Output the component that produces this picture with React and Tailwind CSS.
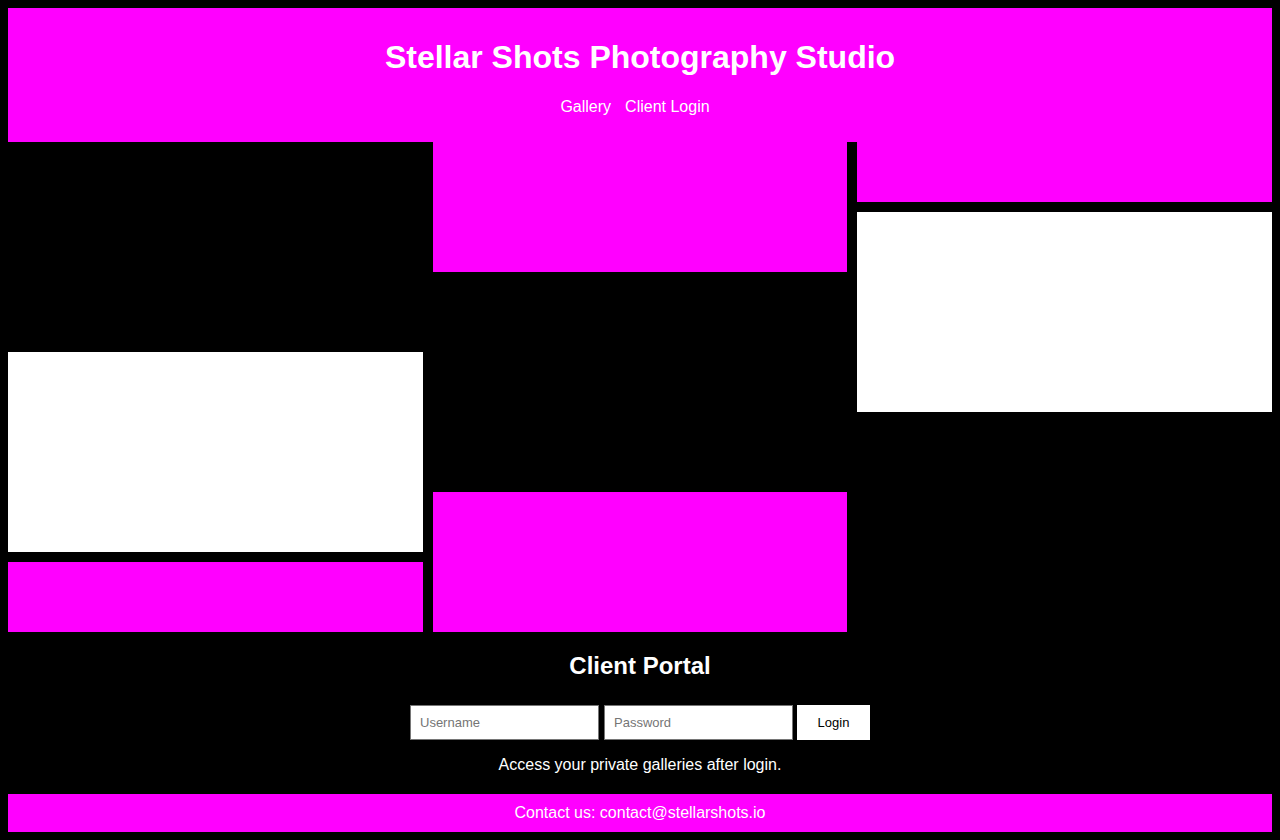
import React from "react";

const COLUMNS = [
  [
    { h: "h-[200px]", bg: "bg-black" },
    { h: "h-[200px]", bg: "bg-white" },
    { h: "h-[70px]", bg: "bg-[#ff00ff]" },
  ],
  [
    { h: "h-[130px]", bg: "bg-[#ff00ff]" },
    { h: "h-[200px]", bg: "bg-black" },
    { h: "h-[140px]", bg: "bg-[#ff00ff]" },
  ],
  [
    { h: "h-[60px]", bg: "bg-[#ff00ff]" },
    { h: "h-[200px]", bg: "bg-white" },
  ],
];

const App = () => {
  return (
    <div className="min-h-[840px] bg-black p-2 font-['Liberation_Sans',Arial,sans-serif] text-white">
      <header className="bg-[#ff00ff] pt-[31px] pb-[26px] text-center">
        <h1 className="text-[32px] leading-[37px] font-bold">
          Stellar Shots Photography Studio
        </h1>
        <nav className="mt-[22px] flex justify-center gap-[4px] text-base leading-[18px]">
          <a href="#gallery" className="mr-[10px]">Gallery</a>
          <a href="#login" className="mr-[10px]">Client Login</a>
        </nav>
      </header>

      <section id="gallery" className="grid grid-cols-3 gap-[10px] items-start">
        {COLUMNS.map((col, i) => (
          <div key={i} className="flex flex-col gap-[10px]">
            {col.map((item, j) => (
              <div key={j} className={`${item.h} ${item.bg}`} />
            ))}
          </div>
        ))}
      </section>

      <section id="login" className="text-center">
        <h2 className="mt-5 text-2xl leading-[28px] font-bold">Client Portal</h2>
        <form className="mt-[25px] flex justify-center items-start">
          <input
            type="text"
            placeholder="Username"
            className="w-[189px] h-[35px] px-[9px] border border-[#767676] bg-white text-[13px] text-black placeholder:text-[#757575] outline-none mr-[5px]"
          />
          <input
            type="password"
            placeholder="Password"
            className="w-[189px] h-[35px] px-[9px] border border-[#767676] bg-white text-[13px] text-black placeholder:text-[#757575] outline-none mr-[4px]"
          />
          <button
            type="button"
            className="w-[73px] h-[35px] bg-white text-black text-[13px]"
          >
            Login
          </button>
        </form>
        <p className="mt-[16px] text-base leading-[18px]">
          Access your private galleries after login.
        </p>
      </section>

      <footer className="mt-[20px] bg-[#ff00ff] py-[10px] text-center text-base leading-[18px]">
        Contact us: contact@stellarshots.io
      </footer>
    </div>
  );
};

export default App;
